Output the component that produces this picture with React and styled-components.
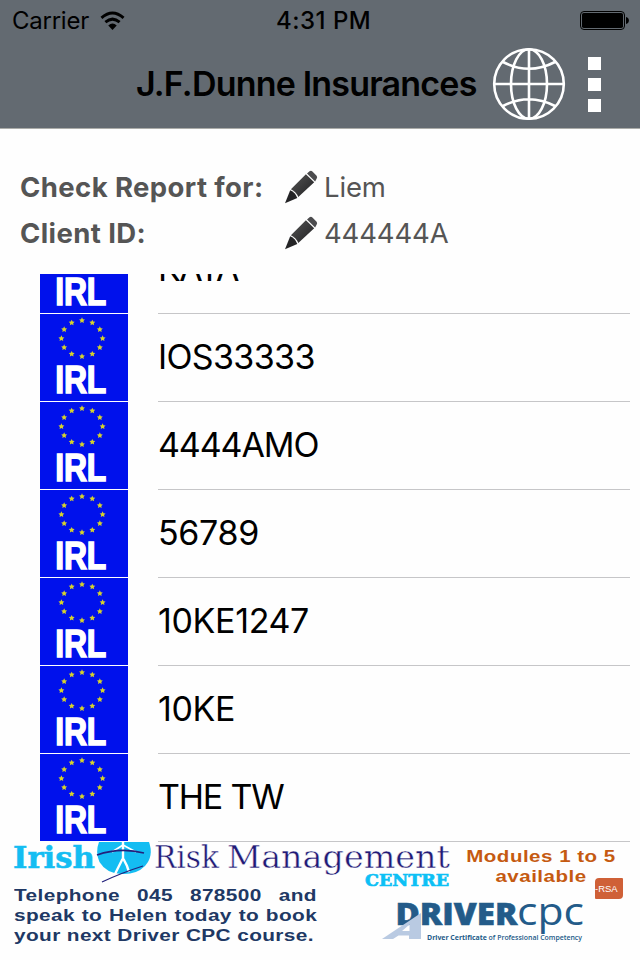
import React from "react";
import styled, { createGlobalStyle } from "styled-components";

const Global = createGlobalStyle`
  * { box-sizing: border-box; }
  body { margin: 0; background: #fff; }
`;

const Screen = styled.div`
  width: 640px;
  height: 960px;
  overflow: hidden;
  display: flex;
  flex-direction: column;
  background: #fefefe;
  font-family: Inter, "Liberation Sans", sans-serif;
  color: #000;
  white-space: nowrap;
`;

const Header = styled.header`
  height: 129px;
  flex: none;
  background: #636a71;
  border-bottom: 1px solid #abaca9;
`;

const StatusBar = styled.div`
  height: 40px;
  padding: 1px 10px 0 12px;
  display: grid;
  grid-template-columns: 264px 1fr auto;
  align-items: center;
  font-size: 24px;
  line-height: 40px;
`;

const Carrier = styled.div`
  display: flex;
  align-items: center;
  gap: 11px;
  letter-spacing: -0.25px;
`;

const Clock = styled.div`
  font-weight: 500;
  letter-spacing: 0.5px;
`;

const NavBar = styled.div`
  height: 88px;
  display: flex;
  align-items: center;
  padding: 0 38px 0 136px;
`;

const Title = styled.h1`
  margin: 0;
  width: 356px;
  font-size: 34px;
  line-height: 88px;
  font-weight: 600;
  letter-spacing: -0.8px;
`;

const MenuDots = styled.div`
  margin-left: 22px;
  display: flex;
  flex-direction: column;
  gap: 8px;
`;

const Dot = styled.span`
  width: 13px;
  height: 13px;
  background: #fff;
`;

const Info = styled.section`
  height: 145px;
  flex: none;
  padding: 35px 20px 0;
  color: #555;
`;

const InfoRow = styled.div`
  height: 46px;
  display: grid;
  grid-template-columns: 264px 40px 1fr;
  align-items: center;
  font-size: 27.5px;
  line-height: 46px;
`;

const Label = styled.span`
  font-weight: 700;
  letter-spacing: 0.4px;
`;

const Value = styled.span`
  letter-spacing: -0.15px;
`;

const List = styled.ul`
  margin: 0;
  padding: 0 10px 0 40px;
  height: 568px;
  flex: none;
  list-style: none;
  overflow: hidden;
  display: flex;
  flex-direction: column;
  justify-content: flex-end;
`;

const Row = styled.li`
  height: 88px;
  flex: none;
  display: grid;
  grid-template-columns: 88px 1fr;
  column-gap: 30px;
`;

const Reg = styled.span`
  border-bottom: 1px solid #c6c6c8;
  font-size: 34px;
  line-height: 85px;
  letter-spacing: ${(p) => p.$tracking};
`;

const Banner = styled.footer`
  position: relative;
  height: 118px;
  flex: none;
  display: grid;
  grid-template-columns: 460px 1fr;
  font-family: "Liberation Sans", Arial, sans-serif;
`;

const Brand = styled.div`
  display: flex;
  flex-direction: column;
`;

const Phone = styled.p`
  margin: -4px 0 0 14px;
  width: 233px;
  font-size: 16px;
  font-weight: 700;
  line-height: 20px;
  letter-spacing: 0.3px;
  color: #203864;
  transform: scaleX(1.3);
  transform-origin: left;
`;

const PhoneLine = styled.span`
  display: flex;
  justify-content: space-between;
  word-spacing: ${(p) => p.$gap || "0"};
`;

const Offer = styled.div`
  display: flex;
  flex-direction: column;
  padding-top: 5px;
`;

const Modules = styled.div`
  width: 162px;
  text-align: center;
  font-size: 16px;
  font-weight: 700;
  line-height: 19.5px;
  letter-spacing: 0.4px;
  color: #c55a11;
  transform: scaleX(1.28);
`;

const Rsa = styled.div`
  position: absolute;
  left: 595px;
  top: 36px;
  width: 28px;
  height: 21px;
  border-radius: 4px 1px 4px 1px;
  background: #cf6037;
  color: #fff;
  font-size: 9.5px;
  line-height: 21px;
`;

const Drawing = styled.svg`
  display: block;
  flex: none;
  overflow: visible;
`;

const CpcLogo = styled(Drawing)`
  margin: 11px 0 0 -80px;
`;

const Wifi = () => (
  <Drawing width="25" height="20" viewBox="0 0 26 20" preserveAspectRatio="none">
    <g fill="none" stroke="#000" strokeWidth="3">
      <path d="M1.500 6.900 Q13 -3 24.500 6.900" />
      <path d="M5.600 11.200 Q13 5 20.400 11.200" />
    </g>
    <path d="M8.600 14.400 Q13 10.600 17.400 14.400 L13 18.900Z" />
  </Drawing>
);

const Battery = () => (
  <Drawing width="50" height="20" viewBox="0 0 50 20">
    <rect x=".5" y=".5" width="44" height="18" rx="3.500" fill="none" stroke="#000" strokeWidth="1" />
    <rect x="2" y="2" width="41" height="15" rx="1.800" />
    <path d="M46 6 Q48.900 6.800 48.900 9.500 Q48.900 12.200 46 13Z" />
  </Drawing>
);

const Globe = () => (
  <Drawing width="74" height="74" viewBox="0 0 74 74" fill="none" stroke="#fff" strokeWidth="2.600">
    <circle cx="37" cy="37" r="34.800" />
    <ellipse cx="37" cy="37" rx="18" ry="34.800" />
    <path d="M37 2V72M2 37H72M11 15Q37 28.500 63 15M11 59Q37 45.500 63 59" />
  </Drawing>
);

const Pencil = () => (
  <Drawing width="34" height="34" viewBox="0 0 34 34">
    <defs>
      <linearGradient id="lead" x1="0" y1="0" x2="1" y2="1">
        <stop offset="0" stopColor="#555" />
        <stop offset="1" stopColor="#202022" />
      </linearGradient>
    </defs>
    <path d="M21.900 4.300 L30.200 12.300 L14.300 27 Q12.300 21.800 6.900 19.200Z" fill="url(#lead)" />
    <path d="M23 3.500 L25.500 1.300 Q27 .300 28.400 1.400 L32.600 5.700 Q33.700 7.200 32.600 8.800 L31.100 11.400Z" fill="#4c4c4e" />
    <path d="M6.200 20.200 Q11.400 22.500 13.300 27.900 L1 33.200Z" fill="#242426" />
  </Drawing>
);

const starPoints = (cx, cy, r) =>
  Array.from({ length: 10 }, (_, i) => {
    const a = (Math.PI * i) / 5 - Math.PI / 2;
    const d = i % 2 ? r * 0.5 : r;
    return `${(cx + d * Math.cos(a)).toFixed(2)},${(cy + d * Math.sin(a)).toFixed(2)}`;
  }).join(" ");

const Plate = () => (
  <Drawing width="88" height="87" viewBox="0 0 88 87">
    <rect width="88" height="87" fill="#0011ec" />
    {Array.from({ length: 12 }, (_, i) => {
      const a = (Math.PI * i) / 6;
      return (
        <polygon
          key={i}
          points={starPoints(42 + 20.6 * Math.cos(a), 24.4 + 18 * Math.sin(a), 3.1)}
          fill="#d6d22c"
        />
      );
    })}
    <text
      transform="scale(.84 1)"
      x="18.1 28.7 55.6"
      y="79.300"
      fontFamily="'Liberation Sans', sans-serif"
      fontWeight="700"
      fontSize="38"
      fill="#fff"
      stroke="#fff"
      strokeWidth="1.500"
    >
      IRL
    </text>
  </Drawing>
);

const BrandLogo = () => (
  <Drawing width="460" height="48" viewBox="0 0 460 48" fontFamily="'DejaVu Serif', serif">
    <text x="13" y="26" fontSize="29" fontWeight="700" fill="#14bdf2" stroke="#14bdf2" strokeWidth=".5" textLength="82" lengthAdjust="spacingAndGlyphs">
      Irish
    </text>
    <path d="M99 0H149Q154 14 145 24Q136 33 121 32Q106 31 99.500 20Q95 10 99 0Z" fill="#14bdf2" />
    <g fill="none" stroke="#fff">
      <path d="M123 0V18M122.500 17L119 24L115 32M123.500 17L127 24L129 30" strokeWidth="2.400" />
      <path d="M123 3L112 10M123 3L136 10" strokeWidth="1.600" />
    </g>
    <g fill="none" stroke="#23217c">
      <path d="M97 13Q120 5 144 11" strokeWidth="1.800" />
      <path d="M102 40Q121 31 143 24" strokeWidth="1.300" />
    </g>
    <g fontSize="31" fill="#211a76" stroke="#fefefe" strokeWidth=".45">
      <text x="154" y="26" textLength="65" lengthAdjust="spacingAndGlyphs">Risk</text>
      <text x="227" y="26" textLength="223" lengthAdjust="spacingAndGlyphs">Management</text>
    </g>
    <text x="365" y="44" fontSize="17" fontWeight="700" fill="#0cc0f5" stroke="#0cc0f5" strokeWidth=".7" textLength="84" lengthAdjust="spacingAndGlyphs">
      CENTRE
    </text>
  </Drawing>
);

const DriverLogo = () => (
  <CpcLogo width="210" height="46" viewBox="0 0 210 46" fontFamily="'Open Sans', sans-serif">
    <text x="15.500" y="28" fontSize="29.500" fontWeight="800" fill="#235b89" stroke="#235b89" strokeWidth=".5" textLength="122" lengthAdjust="spacingAndGlyphs">
      DRIVER
    </text>
    <text x="137" y="28" fontSize="39" fill="#235b89" fontWeight="400" textLength="67" lengthAdjust="spacingAndGlyphs">
      cpc
    </text>
    <path d="M2 42L41 16V42H29V38.500H18.500L13 42ZM22 34H29.500V27.500Z" fill="#b9cae2" fillRule="evenodd" />
    <text x="47" y="42.500" fontSize="6.200" fontWeight="700" fill="#235b89" textLength="155" lengthAdjust="spacingAndGlyphs">
      Driver Certificate <tspan fontWeight="600">of Professional Competency</tspan>
    </text>
  </CpcLogo>
);

const rows = [
  { reg: "KATA", tracking: "-1.5px" },
  { reg: "IOS33333", tracking: "-0.65px" },
  { reg: "4444AMO", tracking: "-1.1px" },
  { reg: "56789", tracking: "-0.35px" },
  { reg: "10KE1247", tracking: "-0.35px" },
  { reg: "10KE", tracking: "-0.4px" },
  { reg: "THE TW", tracking: "-1.2px" },
];

export default function App() {
  return (
    <Screen>
      <Global />
      <Header>
        <StatusBar>
          <Carrier>Carrier <Wifi /></Carrier>
          <Clock>4:31 PM</Clock>
          <Battery />
        </StatusBar>
        <NavBar>
          <Title>J.F.Dunne Insurances</Title>
          <Globe />
          <MenuDots><Dot /><Dot /><Dot /></MenuDots>
        </NavBar>
      </Header>
      <Info>
        <InfoRow>
          <Label>Check Report for:</Label>
          <Pencil />
          <Value>Liem</Value>
        </InfoRow>
        <InfoRow>
          <Label>Client ID:</Label>
          <Pencil />
          <Value>444444A</Value>
        </InfoRow>
      </Info>
      <List>
        {rows.map(({ reg, tracking }) => (
          <Row key={reg}>
            <Plate />
            <Reg $tracking={tracking}>{reg}</Reg>
          </Row>
        ))}
      </List>
      <Banner>
        <Brand>
          <BrandLogo />
          <Phone>
            <PhoneLine><span>Telephone</span> <span>045</span> <span>878500</span> <span>and</span></PhoneLine>
            <PhoneLine $gap="0.5px">speak to Helen today to book</PhoneLine>
            <PhoneLine>your next Driver CPC course.</PhoneLine>
          </Phone>
        </Brand>
        <Offer>
          <Modules>Modules 1 to 5<br />available</Modules>
          <DriverLogo />
        </Offer>
        <Rsa>-RSA</Rsa>
      </Banner>
    </Screen>
  );
}
